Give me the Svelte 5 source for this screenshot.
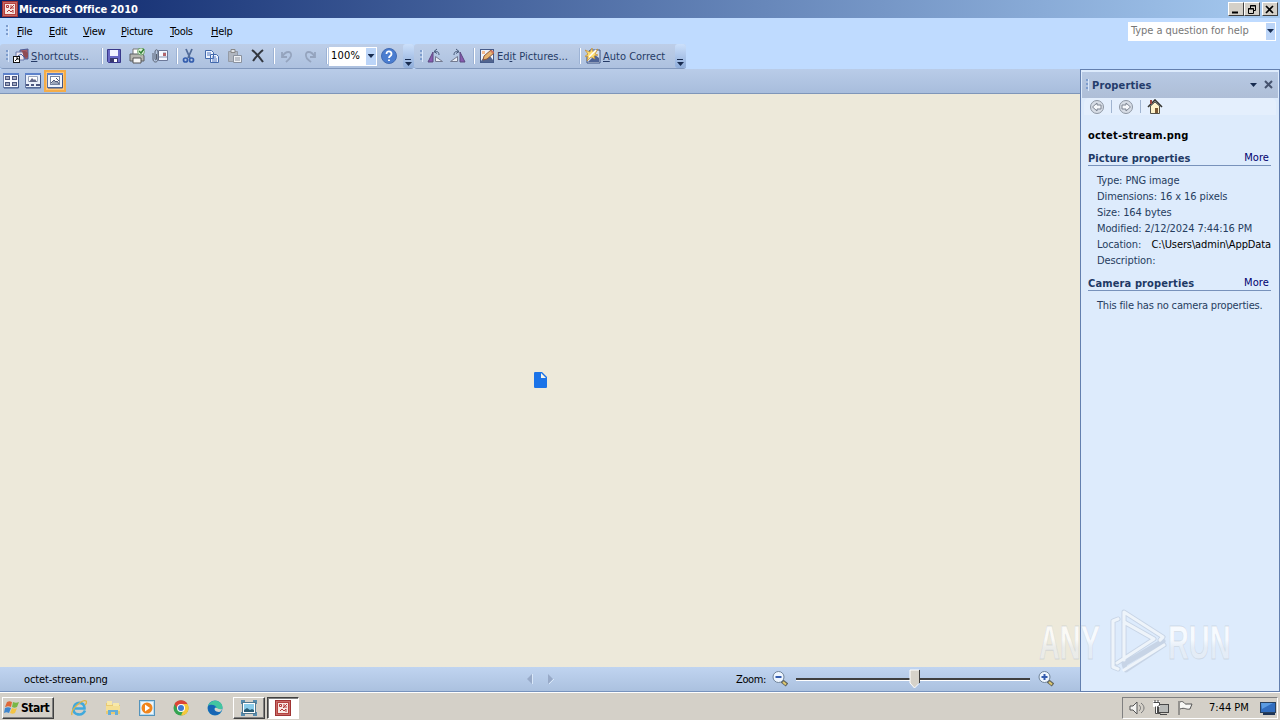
<script>
	const menus = [
		{ key: "F", rest: "ile", width: 32 },
		{ key: "E", rest: "dit", width: 34 },
		{ key: "V", rest: "iew", width: 38 },
		{ key: "P", rest: "icture", width: 49 },
		{ key: "T", rest: "ools", width: 41 },
		{ key: "H", rest: "elp", width: 38 }
	];

	const details = [
		"Type: PNG image",
		"Dimensions: 16 x 16 pixels",
		"Size: 164 bytes",
		"Modified: 2/12/2024 7:44:16 PM"
	];

	const apps = ["ie", "folder", "player", "chrome", "edge"];
	let zoom = $state("100%");
</script>

{#snippet icon(name)}
	<svg class="icon" width="16" height="16" viewBox="0 0 16 16">
		{#if name === "office"}
			<rect x=".5" y=".5" width="15" height="15" fill="#c96a66" stroke="#a03434" />
			<rect x="2.500" y="2.500" width="11" height="11" fill="#f8e9e4" stroke="#b5433f" />
			<path d="M4.500 4.500h2v2h-2zM9 4v3h3M8 8l4-4M5 11l2-2 2 2 2-2v3" fill="none" stroke="#b23a3a" />
		{:else if name === "shortcut"}
			<path d="M7 2l8-1v10H7z" fill="#a85c63" stroke="#4c5e9b" />
			<path d="M3 4h8v8H3z" fill="#eee7ee" stroke="#6878aa" />
			<path d="M9 3h3l3 2v4l-4 1z" fill="#8f4b54" />
			<path d="M5 8l3-2 4 4" stroke="#4361a8" fill="none" />
			<rect x=".5" y="8.500" width="6" height="6" fill="#fff" stroke="#111" />
			<path d="M2 13l3-3M3 10h2v2" stroke="#111" fill="none" />
		{:else if name === "save"}
			<path d="M1.500 1.500h13v13h-12l-1-1z" fill="#6868c4" stroke="#38388a" />
			<path d="M4 2h8v6H4z" fill="#f3f5ff" />
			<path d="M4 10h8v4H4z" fill="#39396f" />
			<path d="M8 11h3v3H8z" fill="#fff" />
		{:else if name === "print"}
			<path d="M4 7V1h8v6" fill="#fff" stroke="#777" />
			<path d="M1 6h13l1 2v5H1z" fill="#b6b6b0" stroke="#5c6064" />
			<path d="M4 10h8v5H4z" fill="#f7f7f7" stroke="#555" />
			<circle cx="12" cy="3.500" r="3.500" fill="#deeed9" stroke="#5d9a5c" stroke-width=".8" />
			<path d="M10 3l2 2 3-4" fill="none" stroke="#348338" stroke-width="1.5" />
		{:else if name === "mail"}
			<path d="M6.500 2.500h9v10h-9z" fill="#f6f8ff" stroke="#6c7899" />
			<path d="M7 9h8M11 5h3" stroke="#8b97b3" />
			<path d="M11 5h3v3h-3z" fill="#b3656c" />
			<path d="M1 5v6c0 4 5 4 5 0V4c0-3-3-3-3 0v7c0 1 1.500 1 1.500 0V6" fill="none" stroke="#596170" />
		{:else if name === "cut"}
			<path d="M5 1l4 9M11 1L7 10" stroke="#526c99" stroke-width="1.8" fill="none" />
			<circle cx="4.500" cy="12" r="2" fill="none" stroke="#355eae" stroke-width="1.7" />
			<circle cx="10.500" cy="12" r="2" fill="none" stroke="#355eae" stroke-width="1.7" />
		{:else if name === "copy"}
			<path d="M1.500 2.500h6l2 2v6h-8zM6.500 6.500h6l2 2v6h-8z" fill="#eef4ff" stroke="#4269ac" />
			<path d="M3 5h4M3 7h3M8 9h4M8 11h5M8 13h5" stroke="#567ac0" />
		{:else if name === "paste"}
			<path d="M1.500 3.500h9v10h-9z" fill="#b0b6c0" stroke="#949ba6" />
			<path d="M4 1.500h4v3H4z" fill="#e1e4e8" stroke="#888" />
			<path d="M6.500 7.500h8v7h-8z" fill="#eff1f4" stroke="#8a929f" />
			<path d="M8 10h5M8 12h5" stroke="#8a929f" />
		{:else if name === "delete"}
			<path d="M2 2c4 3 7 6 11 12M13 2C9 5 6 9 3 13" fill="none" stroke="#333840" stroke-width="2" />
		{:else if name === "undo"}
			<path d="M3 4v5h5M3 9c4-7 10-6 9-1-1 3-3 4-5 6" fill="none" stroke="#95a4be" stroke-width="1.8" />
		{:else if name === "redo"}
			<path d="M13 4v5H8M13 9C9 2 3 3 4 8c0 3 3 4 5 6" fill="none" stroke="#95a4be" stroke-width="1.8" />
		{:else if name === "help"}
			<circle cx="8" cy="8" r="7.500" fill="#4a7dd0" stroke="#416bb3" />
			<path d="M5.500 6c0-4 5-3 5 0 0 2-2.500 2-2.500 4M8 11.500v1.500" fill="none" stroke="#fff" stroke-width="1.8" />
		{:else if name === "rotateLeft" || name === "rotateRight"}
			<g transform={name === "rotateRight" ? "translate(16 0) scale(-1 1)" : ""}>
				<path d="M6 4v10H1z" fill="#8a5bb0" stroke="#5b4a80" />
				<path d="M8.500 13.500h7l-7-5z" fill="#e9edf5" stroke="#747b91" />
				<path d="M12 7c0-4-3-4-5-3M10 1L7 3.500l3 2" fill="none" stroke="#465878" />
			</g>
		{:else if name === "edit"}
			<rect x="1.500" y="1.500" width="13" height="13" fill="#eef2fb" stroke="#465b8a" />
			<path d="M2 13l4-5 3 2 2-2 3 4v2H2z" fill="#52658f" />
			<path d="M4 12l1-4 7-6 3 3-7 6z" fill="#e6b371" stroke="#8b573e" />
			<path d="M11 3l2-1 2 2-1 2z" fill="#cf7762" />
			<path d="M3 3h3v3H3z" fill="#f3bb93" />
		{:else if name === "auto"}
			<path d="M5 2h10v13H2V8z" fill="#d9dfec" stroke="#3c5281" />
			<path d="M10 7l4 3v4H3z" fill="#4d6395" />
			<path d="M7 0l1 4 5-3-3 5 3 1-4 1 1 3-4-2-4 4 1-5-4 1 4-3-3-4 5 2z" fill="#ffdf72" stroke="#c08d36" stroke-width=".7" />
			<path d="M4 9l7-7" stroke="#fff" stroke-width="1.500" />
		{:else if name === "thumbs"}
			<rect x=".5" y=".5" width="15" height="14" fill="#f7f9ff" stroke="#7182ab" />
			<path d="M2 3h5v4H2zM9 3h5v4H9zM2 9h5v4H2zM9 9h5v4H9z" fill="#4b567f" />
			<path d="M3 4h3v2H3zM10 4h3v2h-3zM3 10h3v2H3zM10 10h3v2h-3z" fill="#a3aac0" />
			<path d="M0 1h16" stroke="#5d82cb" stroke-width="2" />
			<path d="M15.500 2v13H1" fill="none" stroke="#3f5689" />
		{:else if name === "filmstrip"}
			<rect x=".5" y=".5" width="15" height="14" fill="#eaf0fa" stroke="#667aa7" />
			<path d="M0 1h16" stroke="#5d82cb" stroke-width="2" />
			<path d="M3.500 3.500h9v5h-9z" fill="#fff" stroke="#9ba6bd" />
			<path d="M4 9l3-4 2 2 1-1 2 3z" fill="#626888" />
			<path d="M1 11h3v2H1zM6 11h3v2H6zM11 11h4v2h-4z" fill="#4b567f" />
			<path d="M15.500 2v13H1" fill="none" stroke="#3f5689" />
		{:else if name === "single"}
			<rect x=".5" y=".5" width="15" height="14" fill="#edf2fd" stroke="#5c719d" />
			<path d="M0 1h16" stroke="#5d82cb" stroke-width="2" />
			<rect x="3.500" y="3.500" width="9" height="8" fill="#fff" stroke="#7684a1" />
			<path d="M4 11l3-4 2 2 2-1 1 3z" fill="#9aa3b8" />
			<path d="M4 10l3-3 2 2 1-1 2 3M9 5l3 3" fill="none" stroke="#50597b" />
			<path d="M15.500 2v13H1" fill="none" stroke="#3f5689" />
		{:else if name === "back" || name === "forward"}
			<g transform={name === "forward" ? "translate(16 0) scale(-1 1)" : ""}>
				<circle cx="8" cy="8" r="6.500" fill="#d7dde6" stroke="#8d96a3" />
				<path d="M3.500 8L8 4v2h4v4H8v2z" fill="#f6f8fb" stroke="#7c8491" />
			</g>
		{:else if name === "home"}
			<path d="M3.500 7v7.500h9V7L8 3z" fill="#fff3ca" stroke="#54534a" />
			<path d="M1 8l7-7 7 7" fill="none" stroke="#33332d" stroke-width="1.600" />
			<path d="M8 9h3v5H8z" fill="#7d5a35" />
			<path d="M3 1h2v4H3z" fill="#9b4842" />
		{:else if name === "minus" || name === "plus"}
			<path d="M10 10l5 4" stroke="#62645b" stroke-width="4" />
			<path d="M11 11l3 2.500" stroke="#e0c96d" stroke-width="2" />
			<circle cx="6.500" cy="6" r="5.500" fill="#eef6ff" stroke="#6f8399" />
			<path d={name === "minus" ? "M3.500 6h6" : "M3.500 6h6M6.500 3v6"} stroke="#345cae" stroke-width="2" />
		{:else if name === "windows"}
			<path d="M3 2c2-1 3-1 5 0L7 7C5 6 4 6 1 7z" fill="#df6838" />
			<path d="M9 2c2 1 4 1 6 0l-2 5c-2 1-3 1-5 0z" fill="#78b747" />
			<path d="M1 8c2-1 4-1 6 0l-2 5c-2-1-3-1-5 0z" fill="#3f86ce" />
			<path d="M8 8c2 1 4 1 5 0l-2 5c-2 1-3 1-5 0z" fill="#f3c443" />
		{:else if name === "ie"}
			<path d="M14 10.500C11 17 2 15 2.500 8.500 3 1 14 1 13.500 8.500H4" fill="none" stroke="#41a9dc" stroke-width="2.600" />
			<path d="M1 15C-1 9 12-1 15 1c1 1 0 3-1 4" fill="none" stroke="#dfb545" stroke-width="1.300" />
		{:else if name === "folder"}
			<path d="M1 3h5l2 2h7v9H1z" fill="#e9ca72" />
			<path d="M2 1h5v4H2zM8 3h6v3H8z" fill="#f8e8a8" />
			<path d="M1 6h14v5H1z" fill="#f5df93" />
			<path d="M3 15v-5h10v5h-3v-3H6v3z" fill="#65aed9" />
		{:else if name === "player"}
			<rect x=".5" y=".5" width="15" height="15" fill="#b6dbf2" stroke="#5493bb" />
			<rect x="2" y="2" width="12" height="12" fill="#eff6fa" />
			<circle cx="8" cy="8" r="5.500" fill="#f1851b" />
			<path d="M6 4.500v7l5-3.500z" fill="#fff" />
		{:else if name === "chrome"}
			<circle cx="8" cy="8" r="7.500" fill="#35a451" />
			<path d="M1.500 4A7.500 7.500 0 0114.500 4H8L5 10z" fill="#dc4436" />
			<path d="M8 4h6.500A7.500 7.500 0 018 15.500L11 9z" fill="#f6c83c" />
			<circle cx="8" cy="8" r="4" fill="#fff" />
			<circle cx="8" cy="8" r="3" fill="#3e79d1" />
		{:else if name === "edge"}
			<circle cx="8" cy="8" r="7.500" fill="#167fbf" />
			<path d="M1 6C4-2 15 0 15.500 7c0 4-5 4-6 2 1-4-5-5-8-3" fill="#43c5a0" />
			<path d="M1 6c4-3 8 0 7 2-2 0-2 4 5 4-3 6-13 3-12-6" fill="#1765b4" />
			<path d="M8 8c2-1 3 2 7 1 0 2-2 3-3 3-4 0-5-3-4-4" fill="#d6d2cb" />
		{:else if name === "viewer"}
			<path d="M0 0h4v4H0zM12 0h4v4h-4zM0 12h4v4H0zM12 12h4v4h-4z" fill="#568caf" />
			<rect x="1.500" y="2.500" width="13" height="11" fill="#fff" stroke="#51788e" />
			<path d="M3 4h10v8H3z" fill="#8accea" />
			<path d="M3 10l3-2 3 2 2-1 2 1v2H3z" fill="#285c75" />
		{:else if name === "sound"}
			<path d="M1 6h3l4-4v12l-4-4H1z" fill="#f3f3f1" stroke="#555" />
			<path d="M10 5c2 2 2 4 0 6M12 3c4 3 4 7 0 10" fill="none" stroke="#777" />
		{:else if name === "network"}
			<rect x="5.500" y="4.500" width="10" height="8" fill="#b9bbb9" stroke="#494949" />
			<path d="M7 14.500h7" stroke="#494949" />
			<path d="M1.500 2.500h4v3h-4zM3.500 6v7" fill="#fff" stroke="#fff" stroke-width="3" />
			<path d="M.5 2.500h6v3l-2 1v7h3M2.500 6.500v7h2M2 0v2M5 0v2" fill="none" stroke="#4b4b4b" />
		{:else if name === "flag"}
			<path d="M2 15V1M3 2c4-2 4 3 7 2h5l-2 5c-4 1-5-2-10 0" fill="#f8f8f5" stroke="#555" />
		{:else if name === "desktop"}
			<rect x=".5" y="2.500" width="15" height="10" fill="#326ebf" stroke="#28415f" />
			<path d="M1 3h12L2 9z" fill="#5b9ce2" />
			<path d="M3 14h12" stroke="#1d3455" stroke-width="2" />
		{/if}
	</svg>
{/snippet}

<div class="screen">
	<header class="titlebar">
		{@render icon("office")}
		<strong>Microsoft Office 2010</strong>
		<div class="window-buttons">
			<button aria-label="Minimize"><svg width="10" height="9"><path d="M1 7.500h6" stroke="#000" stroke-width="2" /></svg></button>
			<button aria-label="Restore"><svg width="10" height="9"><path d="M3.500 3V.5h5v5H6M3 1h6M1.500 3.500h5v5h-5zM1 4h6" fill="none" stroke="#000" /></svg></button>
			<button class="close" aria-label="Close"><svg width="10" height="9"><path d="M1 1l7 7M8 1L1 8" stroke="#000" stroke-width="1.700" /></svg></button>
		</div>
	</header>

	<nav class="menubar">
		<i class="grip"></i>
		{#each menus as menu}
			<span style="width: {menu.width}px"><u>{menu.key}</u>{menu.rest}</span>
		{/each}
		<div class="question"><span>Type a question for help</span><i><b class="arrow"></b></i></div>
	</nav>

	<div class="toolbars">
		<div class="toolbar standard">
			<i class="grip"></i>
			<div class="command shortcuts">{@render icon("shortcut")}<span><u>S</u>hortcuts...</span></div>
			<i class="separator"></i>
			<div class="tools files">
				{@render icon("save")}{@render icon("print")}{@render icon("mail")}
			</div>
			<i class="separator"></i>
			<div class="tools clipboard">
				{@render icon("cut")}{@render icon("copy")}{@render icon("paste")}{@render icon("delete")}
			</div>
			<i class="separator"></i>
			<div class="tools history">{@render icon("undo")}{@render icon("redo")}</div>
			<i class="separator"></i>
			<div class="combo"><input bind:value={zoom} aria-label="Zoom percentage" /><i><b class="arrow"></b></i></div>
			<div class="help">{@render icon("help")}</div>
			<i class="overflow"><b class="arrow"></b></i>
		</div>
		<div class="toolbar pictures">
			<i class="grip"></i>
			<div class="tools rotate">{@render icon("rotateLeft")}{@render icon("rotateRight")}</div>
			<i class="separator"></i>
			<div class="command edit">{@render icon("edit")}<span>Ed<u>i</u>t Pictures...</span></div>
			<i class="separator"></i>
			<div class="command auto">{@render icon("auto")}<span><u>A</u>uto Correct</span></div>
			<i class="overflow"><b class="arrow"></b></i>
		</div>
	</div>

	<div class="workspace">
		<main>
			<div class="viewbar">
				<span>{@render icon("thumbs")}</span><span>{@render icon("filmstrip")}</span><span class="selected">{@render icon("single")}</span>
			</div>
			<div class="canvas">
				<svg width="16" height="16" viewBox="0 0 16 16">
					<path d="M3 0h7l5 5v9.500c0 1-.5 1.500-1.500 1.500h-10C2.500 16 2 15.500 2 14.500v-13C2 .5 2.500 0 3 0z" fill="#1a73e8" />
					<path d="M9 1v5h5z" fill="#f6f4ea" />
				</svg>
			</div>
			<footer class="statusbar">
				<span class="filename">octet-stream.png</span>
				<svg class="pager" width="28" height="12"><path d="M6 1v10L1 6z" fill="#98aac8" /><path d="M22 1v10l5-5z" fill="#98aac8" /><path d="M6.500 1v10M23 11l5-5" stroke="#d9e7f8" /></svg>
				<span class="zoom-label">Zoom:</span>
				{@render icon("minus")}
				<div class="slider">
					<svg class="thumb" width="12" height="20"><path d="M1 1h9v13l-4.500 5L1 14z" fill="#d6d2c9" /><path d="M1 14V1h9M1 14l4.500 5 4-4" fill="none" stroke="#fff" /><path d="M10.500 1v13" stroke="#404040" /></svg>
				</div>
				{@render icon("plus")}
			</footer>
		</main>

		<aside>
			<div class="pane-title">
				<i class="grip"></i><strong>Properties</strong>
				<b class="arrow"></b>
				<svg width="10" height="10"><path d="M1 1l7 7M8 1L1 8" stroke="#46536e" stroke-width="2" /></svg>
			</div>
			<div class="pane-tools">{@render icon("back")}<i></i>{@render icon("forward")}<i></i>{@render icon("home")}</div>
			<div class="pane-body">
				<h1>octet-stream.png</h1>
				<h2><span>Picture properties</span><a href="#picture">More</a></h2>
				<div class="details">
					{#each details as detail}<p>{detail}</p>{/each}
					<p class="location"><span>Location:</span><span>C:\Users\admin\AppData</span></p>
					<p>Description:</p>
				</div>
				<h2 class="camera"><span>Camera properties</span><a href="#camera">More</a></h2>
				<p class="empty">This file has no camera properties.</p>
			</div>
		</aside>
	</div>

	<div class="taskbar">
		<button class="start">{@render icon("windows")}<strong>Start</strong></button>
		<div class="launchers">{#each apps as app}{@render icon(app)}{/each}</div>
		<button class="task">{@render icon("viewer")}</button>
		<button class="task active">{@render icon("office")}</button>
		<div class="tray">
			{@render icon("sound")}{@render icon("network")}{@render icon("flag")}
			<time>7:44 PM</time>{@render icon("desktop")}
		</div>
	</div>

	<!-- Semi-transparent mark across the canvas and properties pane -->
	<svg class="watermark" width="220" height="80" viewBox="0 0 220 80">
		<defs>
			<linearGradient id="fade" x1="0" y1="0" x2="0" y2="1">
				<stop offset=".45" stop-color="#fff" stop-opacity=".75" />
				<stop offset=".6" stop-color="#e9edf2" stop-opacity=".6" />
			</linearGradient>
		</defs>
		<g class="mark-text">
			<text transform="translate(9 56) scale(.59 1)">ANY</text>
			<text transform="translate(138 56) scale(.59 1)">RUN</text>
		</g>
		<g fill="none" stroke-linejoin="round" stroke-linecap="round">
			<path d="M88 16l-5 2v46l5 2M94 57V9l39 25-3 3M94 19l30 17-37 24M133 38L94 61l2 6 38-25" stroke="#8e9cab" stroke-width="5" opacity=".28" />
			<path d="M88 16l-5 2v46l5 2M94 57V9l39 25-3 3M94 19l30 17-37 24M94 67l40-25" stroke="#f8fbff" stroke-width="3.200" opacity=".8" />
		</g>
	</svg>
</div>

<style>
	:global(body) {
		margin: 0;
		overflow: hidden;
	}

	.screen, .screen * {
		box-sizing: border-box;
	}

	.screen {
		position: relative;
		display: flex;
		flex-direction: column;
		width: 1280px;
		height: 720px;
		background: #bfdbff;
		color: #000;
		font: 11px/14px "DejaVu Sans Condensed", "DejaVu Sans", sans-serif;
		font-stretch: condensed;
		letter-spacing: -0.11px;
		white-space: nowrap;
	}

	.icon, svg {
		display: block;
		flex: none;
	}

	i {
		font-style: normal;
	}

	button, input {
		border: 0;
		padding: 0;
		font: inherit;
		letter-spacing: inherit;
	}

	u {
		text-underline-offset: 1px;
	}

	/* Window title and menus */
	.titlebar {
		display: flex;
		align-items: center;
		height: 18px;
		padding: 0 2px;
		background: linear-gradient(90deg, #0a246a, #a6caf0);
		color: #fff;
	}

	.titlebar strong {
		margin-left: 1px;
		padding-top: 1px;
		letter-spacing: -0.05px;
	}

	.window-buttons {
		display: flex;
		margin-left: auto;
	}

	.window-buttons button {
		display: grid;
		place-items: center;
		width: 16px;
		height: 14px;
		background: #d4d0c8;
		border: 1px solid;
		border-color: #fff #404040 #404040 #fff;
	}

	.window-buttons .close {
		margin-left: 2px;
	}

	.menubar {
		display: flex;
		align-items: center;
		height: 26px;
		padding: 0 4px 0 6px;
	}

	.grip {
		flex: none;
		width: 3px;
		height: 12px;
		background: repeating-linear-gradient(#7e9dcd 0 2px, transparent 2px 4px);
		border-right: 1px solid #d8e7fc;
	}

	.menubar > .grip {
		margin-right: 8px;
	}

	.menubar > span {
		padding-top: 1px;
		letter-spacing: -0.3px;
	}

	.question {
		display: flex;
		width: 148px;
		height: 19px;
		margin-left: auto;
		background: #fff;
		color: #777;
		line-height: 17px;
	}

	.question span {
		flex: 1;
		padding-left: 3px;
		letter-spacing: -0.05px;
	}

	.question i, .combo i {
		display: grid;
		place-items: center;
		width: 11px;
		border: 1px solid #fff;
		background: #bcd5f8;
	}

	.arrow {
		display: block;
		width: 7px;
		height: 4px;
		background: #172b4f;
		clip-path: polygon(0 0, 100% 0, 50% 100%);
	}

	/* Toolbars */
	.toolbars {
		display: flex;
		height: 25px;
	}

	.toolbar {
		display: flex;
		align-items: center;
		height: 25px;
		background: linear-gradient(#bdcee8, #adc1df);
		border-bottom: 1px solid #8198bd;
		border-radius: 3px;
		color: #263b66;
	}

	.standard {
		width: 414px;
		padding-left: 6px;
	}

	.pictures {
		width: 272px;
		padding-left: 6px;
	}

	.command {
		display: flex;
		align-items: center;
	}

	.command span {
		margin-left: 2px;
		padding-top: 1px;
		letter-spacing: 0;
	}

	.shortcuts {
		width: 92px;
		padding-left: 4px;
	}

	.shortcuts span {
		letter-spacing: 0.08px;
	}

	.separator {
		flex: none;
		width: 2px;
		height: 16px;
		border-left: 1px solid #9db3d5;
		border-right: 1px solid #fff;
	}

	.tools {
		display: flex;
		gap: 7px;
	}

	.files {
		width: 73px;
		padding-left: 3px;
	}

	.clipboard {
		width: 95px;
		padding-left: 3px;
	}

	.history {
		width: 51px;
		padding-left: 4px;
	}

	.combo {
		display: flex;
		width: 48px;
		height: 19px;
		margin-left: 1px;
		background: #fff;
	}

	.combo input {
		width: 36px;
		padding-left: 2px;
		letter-spacing: 0.2px;
	}

	.combo i {
		width: 12px;
	}

	.help {
		margin-left: 4px;
	}

	.overflow {
		display: flex;
		align-items: flex-end;
		justify-content: center;
		width: 11px;
		height: 24px;
		margin-left: auto;
		padding-bottom: 2px;
		background: linear-gradient(#cce0fb, #8fadda);
		border-radius: 3px;
	}

	.overflow .arrow {
		height: 7px;
		clip-path: polygon(0 0, 85% 0, 85% 15%, 0 15%, 0 43%, 100% 43%, 50% 100%, 0 43%);
	}

	.rotate {
		width: 50px;
		padding-left: 4px;
	}

	.edit {
		width: 104px;
		padding-left: 4px;
	}

	.auto {
		padding-left: 4px;
	}

	/* Image area and status */
	.workspace {
		display: flex;
		height: 623px;
	}

	main {
		display: flex;
		flex-direction: column;
		width: 1080px;
	}

	.viewbar {
		display: flex;
		height: 25px;
		padding-top: 1px;
		background: linear-gradient(#b9cce8, #a8bddc);
		border-bottom: 1px solid #7f96b9;
	}

	.viewbar span {
		display: grid;
		place-items: center;
		width: 22px;
		height: 22px;
	}

	.viewbar .selected {
		background: #ffc578;
		border: 2px solid #f4ac48;
	}

	.canvas {
		display: flex;
		align-items: center;
		justify-content: center;
		height: 573px;
		padding-bottom: 2px;
		background: #ede9da;
	}

	.statusbar {
		display: flex;
		align-items: center;
		height: 25px;
		padding-left: 24px;
		background: linear-gradient(#c0d4f0, #abc1df);
		border-bottom: 1px solid #7893bd;
	}

	.filename {
		width: 502px;
		padding-top: 1px;
	}

	.zoom-label {
		width: 36px;
		margin-left: 182px;
		padding-top: 1px;
		letter-spacing: -0.4px;
	}

	.slider {
		position: relative;
		width: 234px;
		height: 3px;
		margin: 0 8px;
		background: #404040;
		border-bottom: 1px solid #fff;
	}

	.thumb {
		position: absolute;
		left: 113px;
		top: -9px;
	}

	/* Properties pane */
	aside {
		width: 200px;
		height: 623px;
		background: #ddebfc;
		border: 1px solid #637fae;
	}

	.pane-title {
		display: flex;
		align-items: center;
		height: 26px;
		margin: 2px 1px 0;
		padding: 0 4px;
		background: linear-gradient(#b7c9e4, #aebed7);
		color: #243c6b;
	}

	.pane-title strong {
		margin-left: 3px;
		padding-top: 1px;
		letter-spacing: 0.13px;
	}

	.pane-title .arrow {
		margin-left: auto;
		margin-right: 7px;
	}

	.pane-tools {
		display: flex;
		align-items: center;
		height: 17px;
		margin: 0 3px 1px;
		padding-left: 5px;
		background: #e4effd;
		border-radius: 5px 5px 0 0;
	}

	.pane-tools i {
		width: 1px;
		height: 13px;
		margin: 0 6px;
		background: #a0b4d0;
	}

	.pane-body {
		padding: 12px 8px 0 7px;
	}

	h1 {
		height: 22px;
		margin: 0;
		font-size: 11px;
		line-height: 16px;
		letter-spacing: 0.22px;
	}

	h2 {
		display: flex;
		justify-content: space-between;
		height: 16px;
		margin: 0;
		border-bottom: 1px solid #7892bb;
		font-size: 11px;
		line-height: 17px;
		letter-spacing: 0.05px;
		color: #1e3965;
	}

	h2 a {
		padding-right: 2px;
		font-weight: normal;
		line-height: 15px;
		color: #00006f;
		text-decoration: none;
	}

	.details {
		padding: 7px 0 0 9px;
		color: #263d60;
	}

	p {
		height: 16px;
		margin: 0;
		line-height: 16px;
	}

	.location {
		display: flex;
		justify-content: space-between;
	}

	.location span:last-child {
		color: #000;
	}

	.camera {
		margin-top: 6px;
		letter-spacing: 0.13px;
	}

	.empty {
		padding: 7px 0 0 9px;
		color: #263d60;
		letter-spacing: -0.18px;
	}

	/* Windows taskbar */
	.taskbar {
		display: flex;
		align-items: center;
		height: 28px;
		padding: 2px 2px 0;
		background: #d4d0c8;
		border-top: 1px solid #fff;
	}

	.start, .task {
		display: flex;
		align-items: center;
		height: 22px;
		background: #d4d0c8;
		border: 1px solid;
		border-color: #fff #404040 #404040 #fff;
		box-shadow: inset -1px -1px #808080;
	}

	.start {
		width: 52px;
		padding-left: 1px;
	}

	.start strong {
		margin-left: 1px;
		font-size: 12px;
		letter-spacing: -0.5px;
	}

	.launchers {
		display: flex;
		gap: 18px;
		width: 179px;
		padding-left: 17px;
	}

	.task {
		justify-content: center;
		width: 32px;
		margin-right: 2px;
	}

	.task.active {
		background: #fff;
		border-color: #404040 #fff #fff #404040;
		box-shadow: inset 1px 1px #808080;
	}

	.tray {
		display: flex;
		align-items: center;
		gap: 8px;
		width: 156px;
		height: 22px;
		margin-left: auto;
		padding-left: 6px;
		border: 1px solid;
		border-color: #808080 #fff #fff #808080;
	}

	.tray time {
		width: 43px;
		margin-left: 8px;
		letter-spacing: 0;
	}

	.watermark {
		position: absolute;
		left: 1030px;
		top: 603px;
		overflow: visible;
		pointer-events: none;
	}

	.mark-text {
		fill: url(#fade);
		stroke: #a6b1be;
		stroke-opacity: 0.35;
		stroke-width: 0.8;
		font: bold 49px "Liberation Sans", sans-serif;
		letter-spacing: 0;
	}
</style>
